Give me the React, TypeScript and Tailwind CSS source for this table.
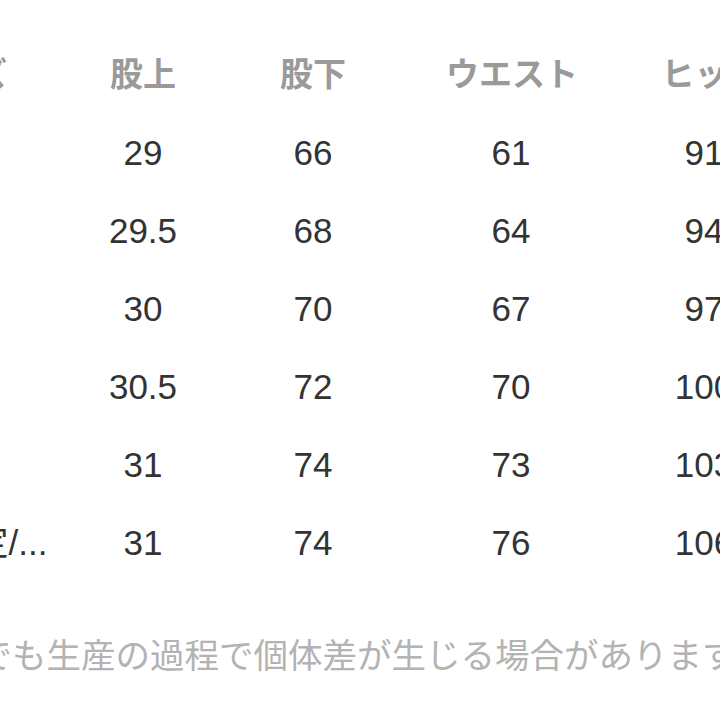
import React from "react";

const headers = ["サイズ", "股上", "股下", "ウエスト", "ヒップ"];
const rows = [
  ["S", "29", "66", "61", "91"],
  ["M", "29.5", "68", "64", "94"],
  ["L", "30", "70", "67", "97"],
  ["XL", "30.5", "72", "70", "100"],
  ["XXL", "31", "74", "73", "103"],
  ["特別指定/...", "31", "74", "76", "106"],
];

const font = { fontFamily: '"Liberation Sans", "Noto Sans CJK JP", sans-serif' };

export default function App() {
  return (
    <div className="w-[720px] h-[720px] overflow-hidden bg-white" style={font}>
      <div className="ml-[-142px] w-[938px] pt-[36px]">
        <div className="grid grid-cols-[200px_170px_170px_228px_170px] h-[78px] items-center text-[33px] text-[#9a9a9a] font-bold">
          {headers.map((h) => (
            <div key={h} className="text-center whitespace-nowrap">{h}</div>
          ))}
        </div>
        {rows.map((r, i) => (
          <div
            key={i}
            className="grid grid-cols-[200px_170px_170px_226px_160px] h-[78px] items-center text-[35px] text-[#333333]"
          >
            {r.map((c, j) => (
              <div key={j} className="text-center whitespace-nowrap">{c}</div>
            ))}
          </div>
        ))}
      </div>
      <div className="mt-[51px] h-[48px] flex items-center ml-[-194px] whitespace-nowrap text-[34.5px] text-[#b3b3b3]">
        同じサイズでも生産の過程で個体差が生じる場合があります。
      </div>
    </div>
  );
}
